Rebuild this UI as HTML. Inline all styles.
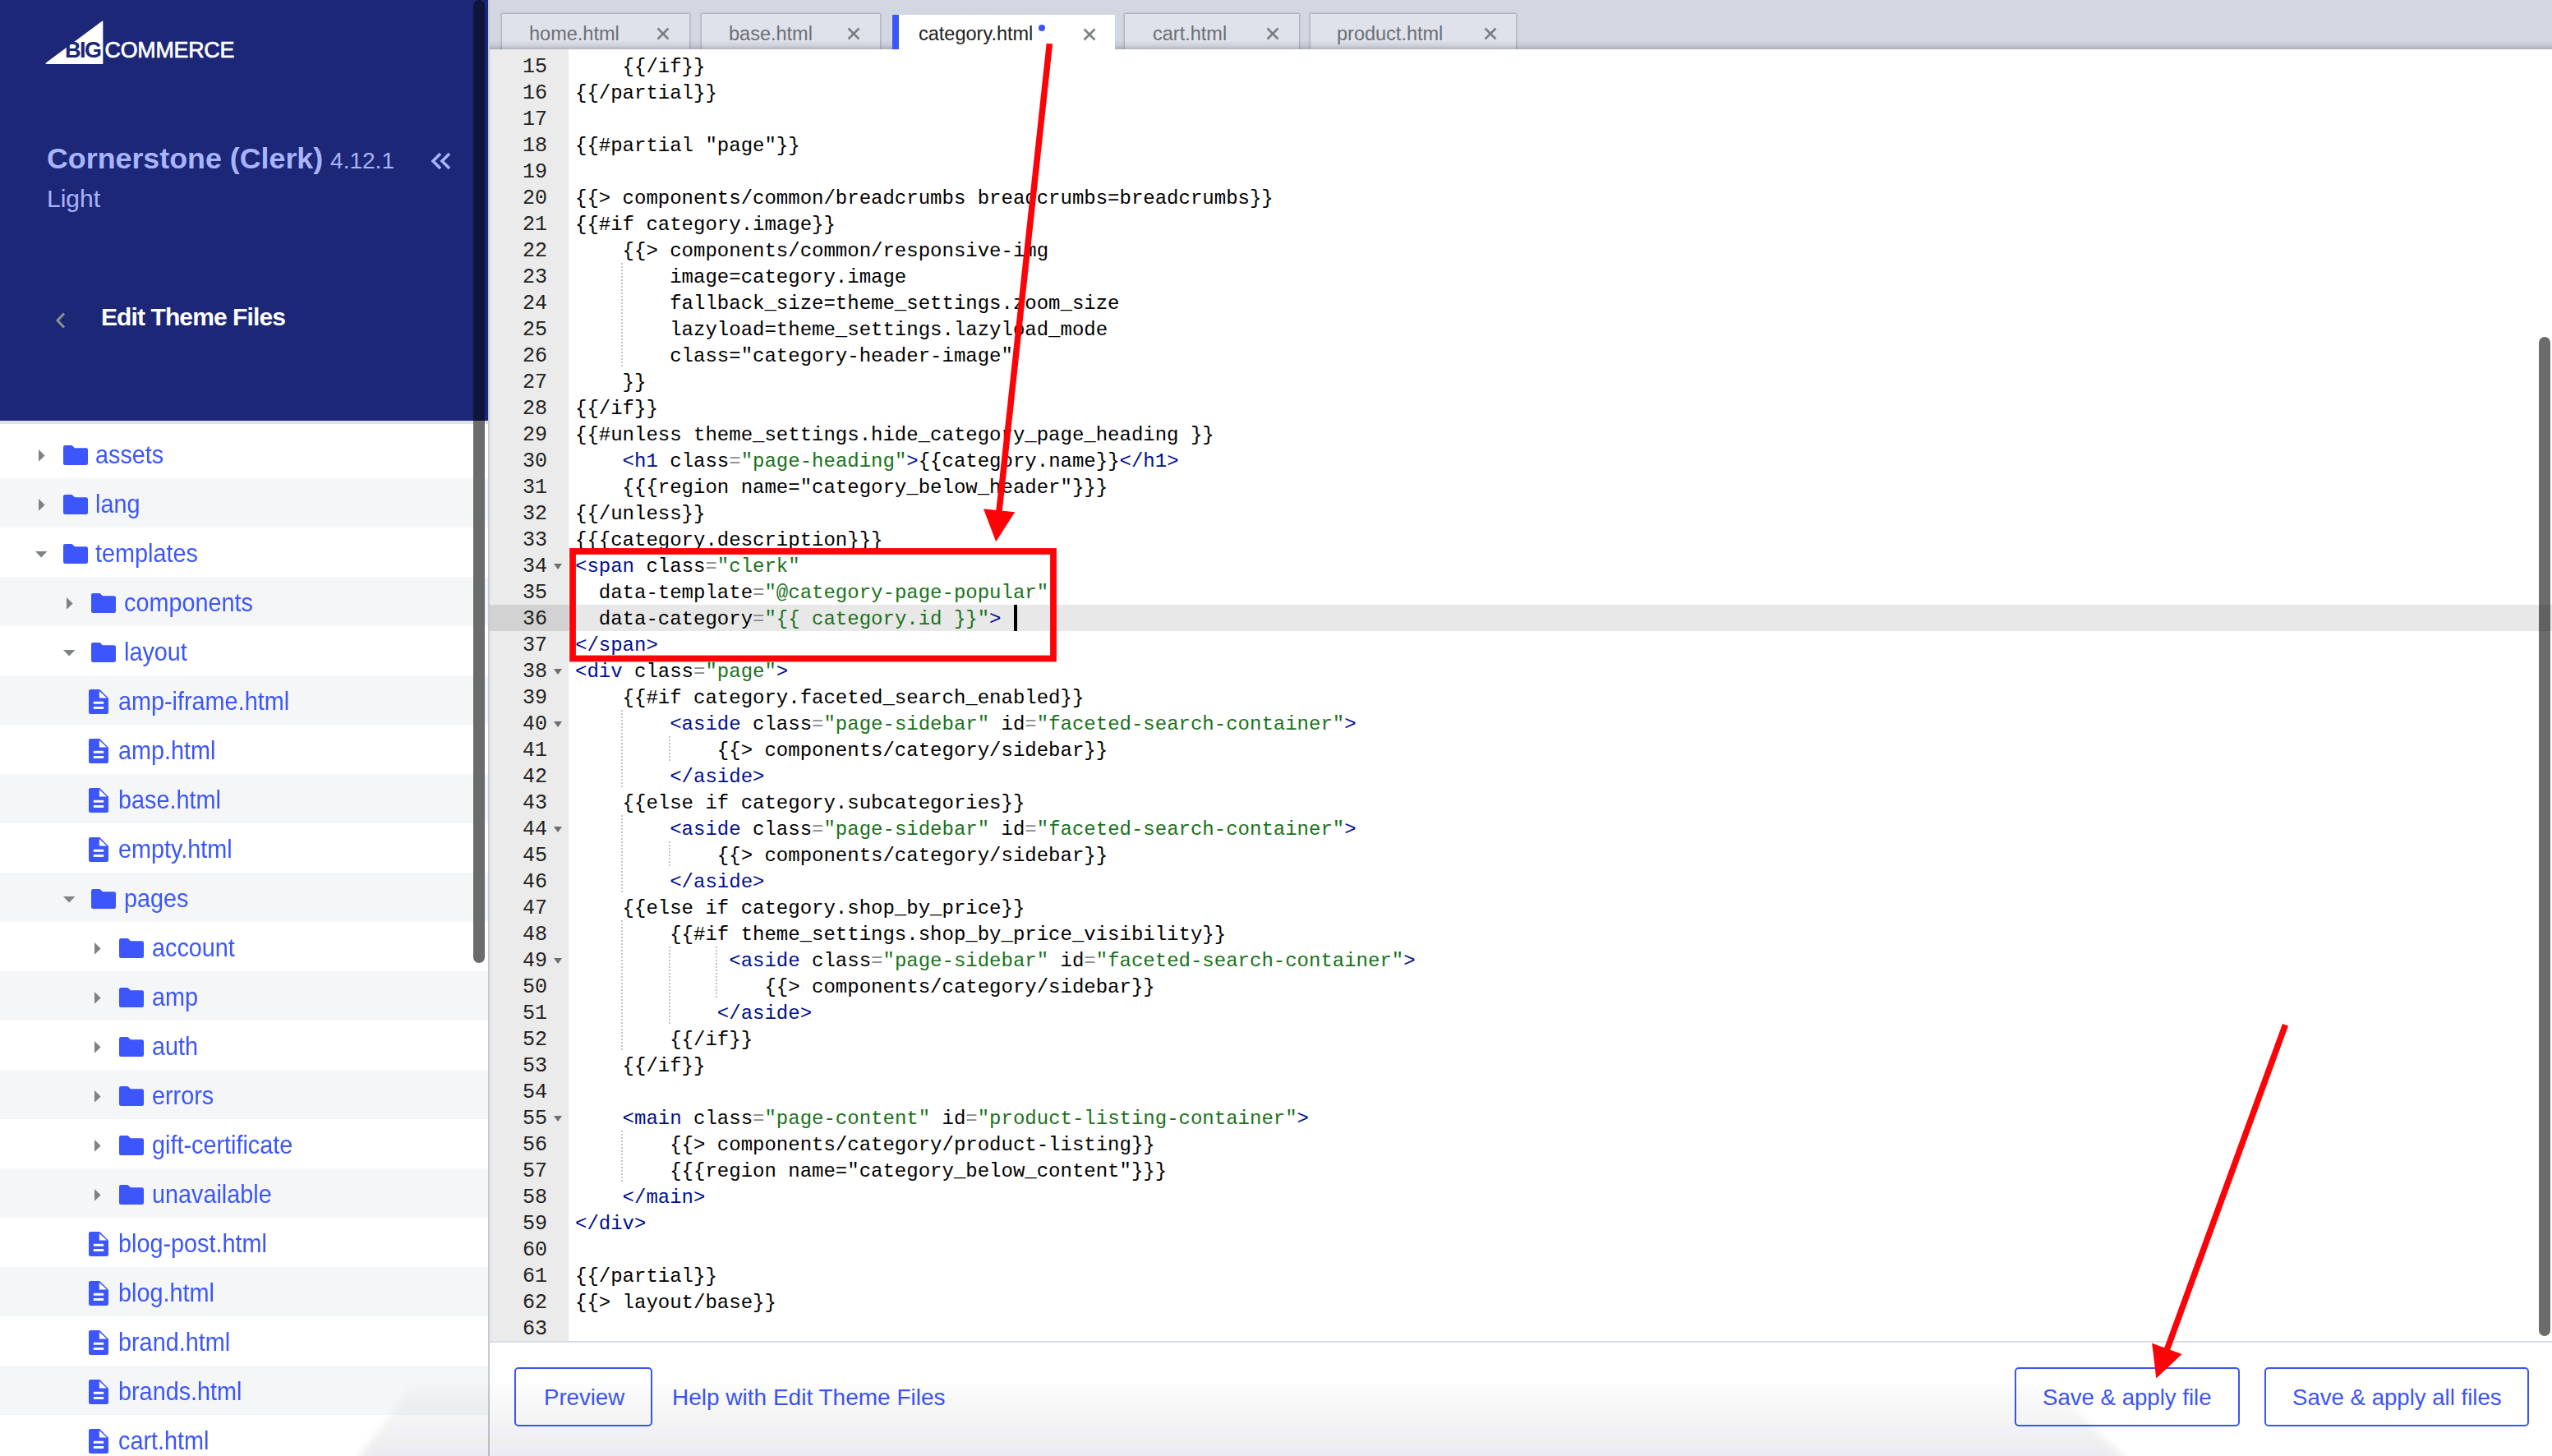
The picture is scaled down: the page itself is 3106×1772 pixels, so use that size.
<!DOCTYPE html>
<html><head><meta charset="utf-8">
<style>
*{margin:0;padding:0;box-sizing:border-box}
html,body{width:3106px;height:1772px;overflow:hidden;background:#fff}
body{position:relative;font-family:"Liberation Sans",sans-serif}
.abs{position:absolute}
.abs svg{display:block}
#side{position:absolute;left:0;top:0;width:594px;height:1772px;background:#fff;overflow:hidden}
#hdr{position:absolute;left:0;top:0;width:594px;height:512px;background:#1c2777}
#hline{position:absolute;left:0;top:512px;width:594px;height:4px;background:#dfe2e8}
.row{position:absolute;left:0;width:594px}
.tt{position:absolute;font-size:32px;line-height:60px;color:#3c56fb;white-space:nowrap;transform:scaleX(0.9);transform-origin:0 0}
#sbar{position:absolute;left:576px;top:512px;width:14px;height:660px;border-radius:0 0 7px 7px;background:#6b6b6b}
#sbar2{position:absolute;left:576px;top:0;width:14px;height:512px;border-radius:7px 7px 0 0;background:#10163a}
#vborder{position:absolute;left:594px;top:0;width:2px;height:1772px;background:#c5cad5}
#tabs{position:absolute;left:596px;top:0;width:2510px;height:60px;background:#d3d7e1;overflow:hidden}
.tabshade{position:absolute;left:0;top:49px;width:2510px;height:11px;background:linear-gradient(to bottom,rgba(80,85,105,0) 0%,rgba(80,85,105,.12) 60%,rgba(80,85,105,.32) 100%)}
.tab{position:absolute;top:17px;height:43px;background:#dfe2ea;box-shadow:0 0 2px 1px rgba(120,125,140,.55)}
.tab .lbl{position:absolute;top:1.5px;font-size:23.5px;line-height:44px;color:#6b6f75;white-space:nowrap}
.tab .x{position:absolute;top:16px;width:16px;height:16px}
#gutter{position:absolute;left:596px;top:60px;width:96px;height:1572px;background:#ebebeb;overflow:hidden}
#code{position:absolute;left:0;top:0;width:3106px;height:1632px;overflow:hidden}
.ln{position:absolute;left:700px;height:32px;padding-top:2px;font-family:"Liberation Mono",monospace;font-size:24px;line-height:32px;color:#000;white-space:pre}
.gn{position:absolute;left:596px;width:70px;height:32px;text-align:right;font-family:"Liberation Mono",monospace;font-size:25px;line-height:32px;padding-top:2px;color:#222}
.fold{position:absolute;left:674px;width:0;height:0;border-left:5px solid transparent;border-right:5px solid transparent;border-top:7px solid #6e6e6e}
.b{color:#000f8f}
.s{color:#19721a}
.g{color:#8a8a8a}
.guide{position:absolute;width:2px;height:32px;background:repeating-linear-gradient(to bottom,#c4c4c4 0,#c4c4c4 2px,transparent 2px,transparent 4px)}
#hl{position:absolute;left:692px;top:736px;width:2414px;height:32px;background:#e8e8e8}
#hlg{position:absolute;left:596px;top:736px;width:96px;height:32px;background:#d2d2d2}
#cursor{position:absolute;left:1234px;top:736px;width:4px;height:32px;background:#000}
#vscroll{position:absolute;left:3090px;top:410px;width:14px;height:1216px;border-radius:7px;background:rgba(0,0,0,.58)}
#bottom{position:absolute;left:596px;top:1632px;width:2510px;height:140px;background:#fff;border-top:2px solid #d8dce3}
#shade{position:absolute;left:0;top:1560px;width:3106px;height:212px;pointer-events:none;background:radial-gradient(ellipse 1130px 110px at 1506px 240px,rgba(20,25,50,.085) 0%,rgba(20,25,50,.055) 45%,rgba(20,25,50,0) 100%)}
.btn{position:absolute;top:1664px;height:72px;border:2.5px solid #3c55f5;border-radius:5px}
.btn span,.link{position:absolute;font-size:27.6px;line-height:70px;color:#3c55f5;white-space:nowrap}
</style></head><body>
<div id="side">
  <div id="hdr">
    <svg class="abs" style="left:0;top:0" width="594" height="512" viewBox="0 0 594 512">
      <path d="M124.6 26.3L124.6 77.2L56.3 77.2Z" fill="#fff" stroke="#fff" stroke-width="1.5" stroke-linejoin="round"/>
      <text x="79" y="70.2" font-family="Liberation Sans" font-weight="bold" font-size="27" fill="#1c2777" letter-spacing="-1.5">BIG</text>
      <text x="127.5" y="70.3" font-family="Liberation Sans" font-size="26.8" fill="#fff" stroke="#fff" stroke-width="0.7" letter-spacing="-0.2">COMMERCE</text>
    </svg>
    <div class="abs" style="left:57px;top:168px;font-size:35.8px;font-weight:bold;color:#a8b4fc;white-space:nowrap;line-height:50px">Cornerstone (Clerk) <span style="font-weight:normal;font-size:28px;margin-left:-1px">4.12.1</span></div>
    <div class="abs" style="left:57px;top:220px;font-size:30px;color:#a8b4fc;line-height:44px">Light</div>
    <svg class="abs" style="left:524px;top:185px" width="26" height="22" viewBox="0 0 26 22"><path d="M12 2L3 11L12 20M23 2L14 11L23 20" fill="none" stroke="#a8b4fc" stroke-width="3.6"/></svg>
    <svg class="abs" style="left:66px;top:379px" width="16" height="22" viewBox="0 0 16 22"><path d="M12 2.5L4 11L12 19.5" fill="none" stroke="#8d9189" stroke-width="3"/></svg>
    <div class="abs" style="left:123px;top:364px;font-size:30px;letter-spacing:-0.9px;font-weight:bold;color:#fff;line-height:44px;white-space:nowrap">Edit Theme Files</div>
  </div>
  <div id="hline"></div>
<div class="row" style="top:516px;height:66px;background:#ffffff"><div class="abs" style="left:47px;top:30.5px;width:8px;height:15px"><svg width="8" height="15" viewBox="0 0 8 15"><path d="M0 0L7.6 7.4L0 14.8Z" fill="#7d8283"/></svg></div><div class="abs" style="left:77.0px;top:26px;width:30px;height:24px"><svg class="ico" width="30" height="24" viewBox="0 0 30 24"><path d="M2.2 0H10.6L14 3.3H27.8A2.2 2.2 0 0 1 30 5.5V21.8A2.2 2.2 0 0 1 27.8 24H2.2A2.2 2.2 0 0 1 0 21.8V2.2A2.2 2.2 0 0 1 2.2 0Z" fill="#3c56fb"/></svg></div><div class="tt" style="left:116.0px;top:7px">assets</div></div>
<div class="row" style="top:582px;height:60px;background:#f5f6f8"><div class="abs" style="left:47px;top:24.5px;width:8px;height:15px"><svg width="8" height="15" viewBox="0 0 8 15"><path d="M0 0L7.6 7.4L0 14.8Z" fill="#7d8283"/></svg></div><div class="abs" style="left:77.0px;top:20px;width:30px;height:24px"><svg class="ico" width="30" height="24" viewBox="0 0 30 24"><path d="M2.2 0H10.6L14 3.3H27.8A2.2 2.2 0 0 1 30 5.5V21.8A2.2 2.2 0 0 1 27.8 24H2.2A2.2 2.2 0 0 1 0 21.8V2.2A2.2 2.2 0 0 1 2.2 0Z" fill="#3c56fb"/></svg></div><div class="tt" style="left:116.0px;top:1px">lang</div></div>
<div class="row" style="top:642px;height:60px;background:#ffffff"><div class="abs" style="left:43.0px;top:28.5px;width:15px;height:8px"><svg width="15" height="8" viewBox="0 0 15 8"><path d="M0 0H14.4L7.2 7.4Z" fill="#7d8283"/></svg></div><div class="abs" style="left:77.0px;top:20px;width:30px;height:24px"><svg class="ico" width="30" height="24" viewBox="0 0 30 24"><path d="M2.2 0H10.6L14 3.3H27.8A2.2 2.2 0 0 1 30 5.5V21.8A2.2 2.2 0 0 1 27.8 24H2.2A2.2 2.2 0 0 1 0 21.8V2.2A2.2 2.2 0 0 1 2.2 0Z" fill="#3c56fb"/></svg></div><div class="tt" style="left:116.0px;top:1px">templates</div></div>
<div class="row" style="top:702px;height:60px;background:#f5f6f8"><div class="abs" style="left:81px;top:24.5px;width:8px;height:15px"><svg width="8" height="15" viewBox="0 0 8 15"><path d="M0 0L7.6 7.4L0 14.8Z" fill="#7d8283"/></svg></div><div class="abs" style="left:111.2px;top:20px;width:30px;height:24px"><svg class="ico" width="30" height="24" viewBox="0 0 30 24"><path d="M2.2 0H10.6L14 3.3H27.8A2.2 2.2 0 0 1 30 5.5V21.8A2.2 2.2 0 0 1 27.8 24H2.2A2.2 2.2 0 0 1 0 21.8V2.2A2.2 2.2 0 0 1 2.2 0Z" fill="#3c56fb"/></svg></div><div class="tt" style="left:150.5px;top:1px">components</div></div>
<div class="row" style="top:762px;height:60px;background:#ffffff"><div class="abs" style="left:77.0px;top:28.5px;width:15px;height:8px"><svg width="15" height="8" viewBox="0 0 15 8"><path d="M0 0H14.4L7.2 7.4Z" fill="#7d8283"/></svg></div><div class="abs" style="left:111.2px;top:20px;width:30px;height:24px"><svg class="ico" width="30" height="24" viewBox="0 0 30 24"><path d="M2.2 0H10.6L14 3.3H27.8A2.2 2.2 0 0 1 30 5.5V21.8A2.2 2.2 0 0 1 27.8 24H2.2A2.2 2.2 0 0 1 0 21.8V2.2A2.2 2.2 0 0 1 2.2 0Z" fill="#3c56fb"/></svg></div><div class="tt" style="left:150.5px;top:1px">layout</div></div>
<div class="row" style="top:822px;height:60px;background:#f5f6f8"><div class="abs" style="left:108px;top:17px;width:24px;height:30px"><svg class="ico" width="24" height="30" viewBox="0 0 24 30"><path d="M2.2 0H13.3L24 10.7V27.8A2.2 2.2 0 0 1 21.8 30H2.2A2.2 2.2 0 0 1 0 27.8V2.2A2.2 2.2 0 0 1 2.2 0Z" fill="#3c56fb"/><path d="M12.9 1.9V10.5H21.9Z" fill="#fff"/><rect x="5.8" y="14.8" width="12.4" height="2.9" fill="#fff"/><rect x="5.8" y="21" width="12.4" height="2.9" fill="#fff"/></svg></div><div class="tt" style="left:144px;top:1px">amp-iframe.html</div></div>
<div class="row" style="top:882px;height:60px;background:#ffffff"><div class="abs" style="left:108px;top:17px;width:24px;height:30px"><svg class="ico" width="24" height="30" viewBox="0 0 24 30"><path d="M2.2 0H13.3L24 10.7V27.8A2.2 2.2 0 0 1 21.8 30H2.2A2.2 2.2 0 0 1 0 27.8V2.2A2.2 2.2 0 0 1 2.2 0Z" fill="#3c56fb"/><path d="M12.9 1.9V10.5H21.9Z" fill="#fff"/><rect x="5.8" y="14.8" width="12.4" height="2.9" fill="#fff"/><rect x="5.8" y="21" width="12.4" height="2.9" fill="#fff"/></svg></div><div class="tt" style="left:144px;top:1px">amp.html</div></div>
<div class="row" style="top:942px;height:60px;background:#f5f6f8"><div class="abs" style="left:108px;top:17px;width:24px;height:30px"><svg class="ico" width="24" height="30" viewBox="0 0 24 30"><path d="M2.2 0H13.3L24 10.7V27.8A2.2 2.2 0 0 1 21.8 30H2.2A2.2 2.2 0 0 1 0 27.8V2.2A2.2 2.2 0 0 1 2.2 0Z" fill="#3c56fb"/><path d="M12.9 1.9V10.5H21.9Z" fill="#fff"/><rect x="5.8" y="14.8" width="12.4" height="2.9" fill="#fff"/><rect x="5.8" y="21" width="12.4" height="2.9" fill="#fff"/></svg></div><div class="tt" style="left:144px;top:1px">base.html</div></div>
<div class="row" style="top:1002px;height:60px;background:#ffffff"><div class="abs" style="left:108px;top:17px;width:24px;height:30px"><svg class="ico" width="24" height="30" viewBox="0 0 24 30"><path d="M2.2 0H13.3L24 10.7V27.8A2.2 2.2 0 0 1 21.8 30H2.2A2.2 2.2 0 0 1 0 27.8V2.2A2.2 2.2 0 0 1 2.2 0Z" fill="#3c56fb"/><path d="M12.9 1.9V10.5H21.9Z" fill="#fff"/><rect x="5.8" y="14.8" width="12.4" height="2.9" fill="#fff"/><rect x="5.8" y="21" width="12.4" height="2.9" fill="#fff"/></svg></div><div class="tt" style="left:144px;top:1px">empty.html</div></div>
<div class="row" style="top:1062px;height:60px;background:#f5f6f8"><div class="abs" style="left:77.0px;top:28.5px;width:15px;height:8px"><svg width="15" height="8" viewBox="0 0 15 8"><path d="M0 0H14.4L7.2 7.4Z" fill="#7d8283"/></svg></div><div class="abs" style="left:111.2px;top:20px;width:30px;height:24px"><svg class="ico" width="30" height="24" viewBox="0 0 30 24"><path d="M2.2 0H10.6L14 3.3H27.8A2.2 2.2 0 0 1 30 5.5V21.8A2.2 2.2 0 0 1 27.8 24H2.2A2.2 2.2 0 0 1 0 21.8V2.2A2.2 2.2 0 0 1 2.2 0Z" fill="#3c56fb"/></svg></div><div class="tt" style="left:150.5px;top:1px">pages</div></div>
<div class="row" style="top:1122px;height:60px;background:#ffffff"><div class="abs" style="left:115px;top:24.5px;width:8px;height:15px"><svg width="8" height="15" viewBox="0 0 8 15"><path d="M0 0L7.6 7.4L0 14.8Z" fill="#7d8283"/></svg></div><div class="abs" style="left:145.4px;top:20px;width:30px;height:24px"><svg class="ico" width="30" height="24" viewBox="0 0 30 24"><path d="M2.2 0H10.6L14 3.3H27.8A2.2 2.2 0 0 1 30 5.5V21.8A2.2 2.2 0 0 1 27.8 24H2.2A2.2 2.2 0 0 1 0 21.8V2.2A2.2 2.2 0 0 1 2.2 0Z" fill="#3c56fb"/></svg></div><div class="tt" style="left:185.0px;top:1px">account</div></div>
<div class="row" style="top:1182px;height:60px;background:#f5f6f8"><div class="abs" style="left:115px;top:24.5px;width:8px;height:15px"><svg width="8" height="15" viewBox="0 0 8 15"><path d="M0 0L7.6 7.4L0 14.8Z" fill="#7d8283"/></svg></div><div class="abs" style="left:145.4px;top:20px;width:30px;height:24px"><svg class="ico" width="30" height="24" viewBox="0 0 30 24"><path d="M2.2 0H10.6L14 3.3H27.8A2.2 2.2 0 0 1 30 5.5V21.8A2.2 2.2 0 0 1 27.8 24H2.2A2.2 2.2 0 0 1 0 21.8V2.2A2.2 2.2 0 0 1 2.2 0Z" fill="#3c56fb"/></svg></div><div class="tt" style="left:185.0px;top:1px">amp</div></div>
<div class="row" style="top:1242px;height:60px;background:#ffffff"><div class="abs" style="left:115px;top:24.5px;width:8px;height:15px"><svg width="8" height="15" viewBox="0 0 8 15"><path d="M0 0L7.6 7.4L0 14.8Z" fill="#7d8283"/></svg></div><div class="abs" style="left:145.4px;top:20px;width:30px;height:24px"><svg class="ico" width="30" height="24" viewBox="0 0 30 24"><path d="M2.2 0H10.6L14 3.3H27.8A2.2 2.2 0 0 1 30 5.5V21.8A2.2 2.2 0 0 1 27.8 24H2.2A2.2 2.2 0 0 1 0 21.8V2.2A2.2 2.2 0 0 1 2.2 0Z" fill="#3c56fb"/></svg></div><div class="tt" style="left:185.0px;top:1px">auth</div></div>
<div class="row" style="top:1302px;height:60px;background:#f5f6f8"><div class="abs" style="left:115px;top:24.5px;width:8px;height:15px"><svg width="8" height="15" viewBox="0 0 8 15"><path d="M0 0L7.6 7.4L0 14.8Z" fill="#7d8283"/></svg></div><div class="abs" style="left:145.4px;top:20px;width:30px;height:24px"><svg class="ico" width="30" height="24" viewBox="0 0 30 24"><path d="M2.2 0H10.6L14 3.3H27.8A2.2 2.2 0 0 1 30 5.5V21.8A2.2 2.2 0 0 1 27.8 24H2.2A2.2 2.2 0 0 1 0 21.8V2.2A2.2 2.2 0 0 1 2.2 0Z" fill="#3c56fb"/></svg></div><div class="tt" style="left:185.0px;top:1px">errors</div></div>
<div class="row" style="top:1362px;height:60px;background:#ffffff"><div class="abs" style="left:115px;top:24.5px;width:8px;height:15px"><svg width="8" height="15" viewBox="0 0 8 15"><path d="M0 0L7.6 7.4L0 14.8Z" fill="#7d8283"/></svg></div><div class="abs" style="left:145.4px;top:20px;width:30px;height:24px"><svg class="ico" width="30" height="24" viewBox="0 0 30 24"><path d="M2.2 0H10.6L14 3.3H27.8A2.2 2.2 0 0 1 30 5.5V21.8A2.2 2.2 0 0 1 27.8 24H2.2A2.2 2.2 0 0 1 0 21.8V2.2A2.2 2.2 0 0 1 2.2 0Z" fill="#3c56fb"/></svg></div><div class="tt" style="left:185.0px;top:1px">gift-certificate</div></div>
<div class="row" style="top:1422px;height:60px;background:#f5f6f8"><div class="abs" style="left:115px;top:24.5px;width:8px;height:15px"><svg width="8" height="15" viewBox="0 0 8 15"><path d="M0 0L7.6 7.4L0 14.8Z" fill="#7d8283"/></svg></div><div class="abs" style="left:145.4px;top:20px;width:30px;height:24px"><svg class="ico" width="30" height="24" viewBox="0 0 30 24"><path d="M2.2 0H10.6L14 3.3H27.8A2.2 2.2 0 0 1 30 5.5V21.8A2.2 2.2 0 0 1 27.8 24H2.2A2.2 2.2 0 0 1 0 21.8V2.2A2.2 2.2 0 0 1 2.2 0Z" fill="#3c56fb"/></svg></div><div class="tt" style="left:185.0px;top:1px">unavailable</div></div>
<div class="row" style="top:1482px;height:60px;background:#ffffff"><div class="abs" style="left:108px;top:17px;width:24px;height:30px"><svg class="ico" width="24" height="30" viewBox="0 0 24 30"><path d="M2.2 0H13.3L24 10.7V27.8A2.2 2.2 0 0 1 21.8 30H2.2A2.2 2.2 0 0 1 0 27.8V2.2A2.2 2.2 0 0 1 2.2 0Z" fill="#3c56fb"/><path d="M12.9 1.9V10.5H21.9Z" fill="#fff"/><rect x="5.8" y="14.8" width="12.4" height="2.9" fill="#fff"/><rect x="5.8" y="21" width="12.4" height="2.9" fill="#fff"/></svg></div><div class="tt" style="left:144px;top:1px">blog-post.html</div></div>
<div class="row" style="top:1542px;height:60px;background:#f5f6f8"><div class="abs" style="left:108px;top:17px;width:24px;height:30px"><svg class="ico" width="24" height="30" viewBox="0 0 24 30"><path d="M2.2 0H13.3L24 10.7V27.8A2.2 2.2 0 0 1 21.8 30H2.2A2.2 2.2 0 0 1 0 27.8V2.2A2.2 2.2 0 0 1 2.2 0Z" fill="#3c56fb"/><path d="M12.9 1.9V10.5H21.9Z" fill="#fff"/><rect x="5.8" y="14.8" width="12.4" height="2.9" fill="#fff"/><rect x="5.8" y="21" width="12.4" height="2.9" fill="#fff"/></svg></div><div class="tt" style="left:144px;top:1px">blog.html</div></div>
<div class="row" style="top:1602px;height:60px;background:#ffffff"><div class="abs" style="left:108px;top:17px;width:24px;height:30px"><svg class="ico" width="24" height="30" viewBox="0 0 24 30"><path d="M2.2 0H13.3L24 10.7V27.8A2.2 2.2 0 0 1 21.8 30H2.2A2.2 2.2 0 0 1 0 27.8V2.2A2.2 2.2 0 0 1 2.2 0Z" fill="#3c56fb"/><path d="M12.9 1.9V10.5H21.9Z" fill="#fff"/><rect x="5.8" y="14.8" width="12.4" height="2.9" fill="#fff"/><rect x="5.8" y="21" width="12.4" height="2.9" fill="#fff"/></svg></div><div class="tt" style="left:144px;top:1px">brand.html</div></div>
<div class="row" style="top:1662px;height:60px;background:#f5f6f8"><div class="abs" style="left:108px;top:17px;width:24px;height:30px"><svg class="ico" width="24" height="30" viewBox="0 0 24 30"><path d="M2.2 0H13.3L24 10.7V27.8A2.2 2.2 0 0 1 21.8 30H2.2A2.2 2.2 0 0 1 0 27.8V2.2A2.2 2.2 0 0 1 2.2 0Z" fill="#3c56fb"/><path d="M12.9 1.9V10.5H21.9Z" fill="#fff"/><rect x="5.8" y="14.8" width="12.4" height="2.9" fill="#fff"/><rect x="5.8" y="21" width="12.4" height="2.9" fill="#fff"/></svg></div><div class="tt" style="left:144px;top:1px">brands.html</div></div>
<div class="row" style="top:1722px;height:60px;background:#ffffff"><div class="abs" style="left:108px;top:17px;width:24px;height:30px"><svg class="ico" width="24" height="30" viewBox="0 0 24 30"><path d="M2.2 0H13.3L24 10.7V27.8A2.2 2.2 0 0 1 21.8 30H2.2A2.2 2.2 0 0 1 0 27.8V2.2A2.2 2.2 0 0 1 2.2 0Z" fill="#3c56fb"/><path d="M12.9 1.9V10.5H21.9Z" fill="#fff"/><rect x="5.8" y="14.8" width="12.4" height="2.9" fill="#fff"/><rect x="5.8" y="21" width="12.4" height="2.9" fill="#fff"/></svg></div><div class="tt" style="left:144px;top:1px">cart.html</div></div>
  <div id="sbar"></div>
  <div id="sbar2"></div>
</div>
<div id="vborder"></div>

<div id="code">
  <div id="hl"></div>
<div class="guide" style="left:756.1px;top:320px"></div>
<div class="guide" style="left:756.1px;top:352px"></div>
<div class="guide" style="left:756.1px;top:384px"></div>
<div class="guide" style="left:756.1px;top:416px"></div>
<div class="guide" style="left:756.1px;top:864px"></div>
<div class="guide" style="left:756.1px;top:896px"></div>
<div class="guide" style="left:813.7px;top:896px"></div>
<div class="guide" style="left:756.1px;top:928px"></div>
<div class="guide" style="left:756.1px;top:992px"></div>
<div class="guide" style="left:756.1px;top:1024px"></div>
<div class="guide" style="left:813.7px;top:1024px"></div>
<div class="guide" style="left:756.1px;top:1056px"></div>
<div class="guide" style="left:756.1px;top:1120px"></div>
<div class="guide" style="left:756.1px;top:1152px"></div>
<div class="guide" style="left:813.7px;top:1152px"></div>
<div class="guide" style="left:871.3px;top:1152px"></div>
<div class="guide" style="left:756.1px;top:1184px"></div>
<div class="guide" style="left:813.7px;top:1184px"></div>
<div class="guide" style="left:871.3px;top:1184px"></div>
<div class="guide" style="left:756.1px;top:1216px"></div>
<div class="guide" style="left:813.7px;top:1216px"></div>
<div class="guide" style="left:756.1px;top:1248px"></div>
<div class="guide" style="left:756.1px;top:1376px"></div>
<div class="guide" style="left:756.1px;top:1408px"></div>
<div class="ln" style="top:64px">    {{/if}}</div>
<div class="ln" style="top:96px">{{/partial}}</div>
<div class="ln" style="top:128px"></div>
<div class="ln" style="top:160px">{{#partial &quot;page&quot;}}</div>
<div class="ln" style="top:192px"></div>
<div class="ln" style="top:224px">{{&gt; components/common/breadcrumbs breadcrumbs=breadcrumbs}}</div>
<div class="ln" style="top:256px">{{#if category.image}}</div>
<div class="ln" style="top:288px">    {{&gt; components/common/responsive-img</div>
<div class="ln" style="top:320px">        image=category.image</div>
<div class="ln" style="top:352px">        fallback_size=theme_settings.zoom_size</div>
<div class="ln" style="top:384px">        lazyload=theme_settings.lazyload_mode</div>
<div class="ln" style="top:416px">        class=&quot;category-header-image&quot;</div>
<div class="ln" style="top:448px">    }}</div>
<div class="ln" style="top:480px">{{/if}}</div>
<div class="ln" style="top:512px">{{#unless theme_settings.hide_category_page_heading }}</div>
<div class="ln" style="top:544px">    <span class="b">&lt;h1</span> class<span class="g">=</span><span class="s">&quot;page-heading&quot;</span><span class="b">&gt;</span>{{category.name}}<span class="b">&lt;/h1&gt;</span></div>
<div class="ln" style="top:576px">    {{{region name=&quot;category_below_header&quot;}}}</div>
<div class="ln" style="top:608px">{{/unless}}</div>
<div class="ln" style="top:640px">{{{category.description}}}</div>
<div class="ln" style="top:672px"><span class="b">&lt;span</span> class<span class="g">=</span><span class="s">&quot;clerk&quot;</span></div>
<div class="ln" style="top:704px">  data-template<span class="g">=</span><span class="s">&quot;@category-page-popular&quot;</span></div>
<div class="ln" style="top:736px">  data-category<span class="g">=</span><span class="s">&quot;{{ category.id }}&quot;</span><span class="b">&gt;</span> </div>
<div class="ln" style="top:768px"><span class="b">&lt;/span&gt;</span></div>
<div class="ln" style="top:800px"><span class="b">&lt;div</span> class<span class="g">=</span><span class="s">&quot;page&quot;</span><span class="b">&gt;</span></div>
<div class="ln" style="top:832px">    {{#if category.faceted_search_enabled}}</div>
<div class="ln" style="top:864px">        <span class="b">&lt;aside</span> class<span class="g">=</span><span class="s">&quot;page-sidebar&quot;</span> id<span class="g">=</span><span class="s">&quot;faceted-search-container&quot;</span><span class="b">&gt;</span></div>
<div class="ln" style="top:896px">            {{&gt; components/category/sidebar}}</div>
<div class="ln" style="top:928px">        <span class="b">&lt;/aside&gt;</span></div>
<div class="ln" style="top:960px">    {{else if category.subcategories}}</div>
<div class="ln" style="top:992px">        <span class="b">&lt;aside</span> class<span class="g">=</span><span class="s">&quot;page-sidebar&quot;</span> id<span class="g">=</span><span class="s">&quot;faceted-search-container&quot;</span><span class="b">&gt;</span></div>
<div class="ln" style="top:1024px">            {{&gt; components/category/sidebar}}</div>
<div class="ln" style="top:1056px">        <span class="b">&lt;/aside&gt;</span></div>
<div class="ln" style="top:1088px">    {{else if category.shop_by_price}}</div>
<div class="ln" style="top:1120px">        {{#if theme_settings.shop_by_price_visibility}}</div>
<div class="ln" style="top:1152px">             <span class="b">&lt;aside</span> class<span class="g">=</span><span class="s">&quot;page-sidebar&quot;</span> id<span class="g">=</span><span class="s">&quot;faceted-search-container&quot;</span><span class="b">&gt;</span></div>
<div class="ln" style="top:1184px">                {{&gt; components/category/sidebar}}</div>
<div class="ln" style="top:1216px">            <span class="b">&lt;/aside&gt;</span></div>
<div class="ln" style="top:1248px">        {{/if}}</div>
<div class="ln" style="top:1280px">    {{/if}}</div>
<div class="ln" style="top:1312px"></div>
<div class="ln" style="top:1344px">    <span class="b">&lt;main</span> class<span class="g">=</span><span class="s">&quot;page-content&quot;</span> id<span class="g">=</span><span class="s">&quot;product-listing-container&quot;</span><span class="b">&gt;</span></div>
<div class="ln" style="top:1376px">        {{&gt; components/category/product-listing}}</div>
<div class="ln" style="top:1408px">        {{{region name=&quot;category_below_content&quot;}}}</div>
<div class="ln" style="top:1440px">    <span class="b">&lt;/main&gt;</span></div>
<div class="ln" style="top:1472px"><span class="b">&lt;/div&gt;</span></div>
<div class="ln" style="top:1504px"></div>
<div class="ln" style="top:1536px">{{/partial}}</div>
<div class="ln" style="top:1568px">{{&gt; layout/base}}</div>
<div class="ln" style="top:1600px"></div>
  <div id="cursor"></div>
</div>
<div id="gutter"></div>
<div id="hlg"></div>
<div class="gn" style="top:64px">15</div>
<div class="gn" style="top:96px">16</div>
<div class="gn" style="top:128px">17</div>
<div class="gn" style="top:160px">18</div>
<div class="gn" style="top:192px">19</div>
<div class="gn" style="top:224px">20</div>
<div class="gn" style="top:256px">21</div>
<div class="gn" style="top:288px">22</div>
<div class="gn" style="top:320px">23</div>
<div class="gn" style="top:352px">24</div>
<div class="gn" style="top:384px">25</div>
<div class="gn" style="top:416px">26</div>
<div class="gn" style="top:448px">27</div>
<div class="gn" style="top:480px">28</div>
<div class="gn" style="top:512px">29</div>
<div class="gn" style="top:544px">30</div>
<div class="gn" style="top:576px">31</div>
<div class="gn" style="top:608px">32</div>
<div class="gn" style="top:640px">33</div>
<div class="gn" style="top:672px">34</div>
<div class="fold" style="top:686px"></div>
<div class="gn" style="top:704px">35</div>
<div class="gn" style="top:736px">36</div>
<div class="gn" style="top:768px">37</div>
<div class="gn" style="top:800px">38</div>
<div class="fold" style="top:814px"></div>
<div class="gn" style="top:832px">39</div>
<div class="gn" style="top:864px">40</div>
<div class="fold" style="top:878px"></div>
<div class="gn" style="top:896px">41</div>
<div class="gn" style="top:928px">42</div>
<div class="gn" style="top:960px">43</div>
<div class="gn" style="top:992px">44</div>
<div class="fold" style="top:1006px"></div>
<div class="gn" style="top:1024px">45</div>
<div class="gn" style="top:1056px">46</div>
<div class="gn" style="top:1088px">47</div>
<div class="gn" style="top:1120px">48</div>
<div class="gn" style="top:1152px">49</div>
<div class="fold" style="top:1166px"></div>
<div class="gn" style="top:1184px">50</div>
<div class="gn" style="top:1216px">51</div>
<div class="gn" style="top:1248px">52</div>
<div class="gn" style="top:1280px">53</div>
<div class="gn" style="top:1312px">54</div>
<div class="gn" style="top:1344px">55</div>
<div class="fold" style="top:1358px"></div>
<div class="gn" style="top:1376px">56</div>
<div class="gn" style="top:1408px">57</div>
<div class="gn" style="top:1440px">58</div>
<div class="gn" style="top:1472px">59</div>
<div class="gn" style="top:1504px">60</div>
<div class="gn" style="top:1536px">61</div>
<div class="gn" style="top:1568px">62</div>
<div class="gn" style="top:1600px">63</div>
<div id="vscroll"></div>

<div id="tabs">
  <div class="tab" style="left:15px;width:228px"><div class="lbl" style="left:33px">home.html</div><svg class="x" style="left:188px" viewBox="0 0 16 16"><path d="M1.5 1.5L14.5 14.5M14.5 1.5L1.5 14.5" stroke="#7a7f83" stroke-width="2.6"/></svg></div>
  <div class="tab" style="left:258px;width:217px"><div class="lbl" style="left:33px">base.html</div><svg class="x" style="left:177px" viewBox="0 0 16 16"><path d="M1.5 1.5L14.5 14.5M14.5 1.5L1.5 14.5" stroke="#7a7f83" stroke-width="2.6"/></svg></div>
  <div class="tab" style="left:773px;width:212px"><div class="lbl" style="left:34px">cart.html</div><svg class="x" style="left:172px" viewBox="0 0 16 16"><path d="M1.5 1.5L14.5 14.5M14.5 1.5L1.5 14.5" stroke="#7a7f83" stroke-width="2.6"/></svg></div>
  <div class="tab" style="left:999px;width:250px"><div class="lbl" style="left:32px">product.html</div><svg class="x" style="left:211px" viewBox="0 0 16 16"><path d="M1.5 1.5L14.5 14.5M14.5 1.5L1.5 14.5" stroke="#7a7f83" stroke-width="2.6"/></svg></div>
  <div class="tabshade"></div>
  <div class="tab" style="left:490px;width:271px;top:18px;height:42px;background:#fff;box-shadow:none;border-left:8px solid #3c55f5"><div class="lbl" style="left:24px;top:0.5px;color:#222">category.html</div><div class="abs" style="left:170px;top:12px;width:8px;height:8px;border-radius:50%;background:#3c55f5"></div><svg class="x" style="left:224px;top:16px" viewBox="0 0 16 16"><path d="M1.5 1.5L14.5 14.5M14.5 1.5L1.5 14.5" stroke="#7a7f83" stroke-width="2.6"/></svg></div>
</div>

<div id="bottom"></div>
<div class="btn" style="left:626px;width:168px"><span style="left:34px">Preview</span></div>
<div class="link" style="left:818px;top:1666px;font-size:28px">Help with Edit Theme Files</div>
<div class="btn" style="left:2452px;width:274px"><span style="left:32px">Save &amp; apply file</span></div>
<div class="btn" style="left:2756px;width:322px"><span style="left:32px">Save &amp; apply all files</span></div>

<svg class="abs" style="left:0;top:0" width="3106" height="1772" viewBox="0 0 3106 1772">
  <defs>
    <linearGradient id="shg" x1="0" y1="0" x2="0" y2="1"><stop offset="0" stop-color="rgb(20,25,50)" stop-opacity="0.015"/><stop offset="0.5" stop-color="rgb(20,25,50)" stop-opacity="0.05"/><stop offset="1" stop-color="rgb(20,25,50)" stop-opacity="0.095"/></linearGradient>
    <filter id="shb" x="-5%" y="-50%" width="110%" height="200%"><feGaussianBlur stdDeviation="5"/></filter>
  </defs>
  <polygon points="500,1688 2500,1688 2600,1790 425,1790" fill="url(#shg)" filter="url(#shb)"/>
  <rect x="697" y="671" width="585" height="130.5" fill="none" stroke="#fc0307" stroke-width="7.8"/>
  <line x1="1277.4" y1="53.2" x2="1214.7" y2="633.9" stroke="#fc0307" stroke-width="7.5"/>
  <polygon points="1197,619.2 1235.2,623.3 1212.2,659.3" fill="#fc0307"/>
  <line x1="2781.5" y1="1247.3" x2="2633.4" y2="1653.5" stroke="#fc0307" stroke-width="7.5"/>
  <polygon points="2619.2,1634.7 2655.6,1648.1 2624.3,1677.6" fill="#fc0307"/>
</svg>
</body></html>
